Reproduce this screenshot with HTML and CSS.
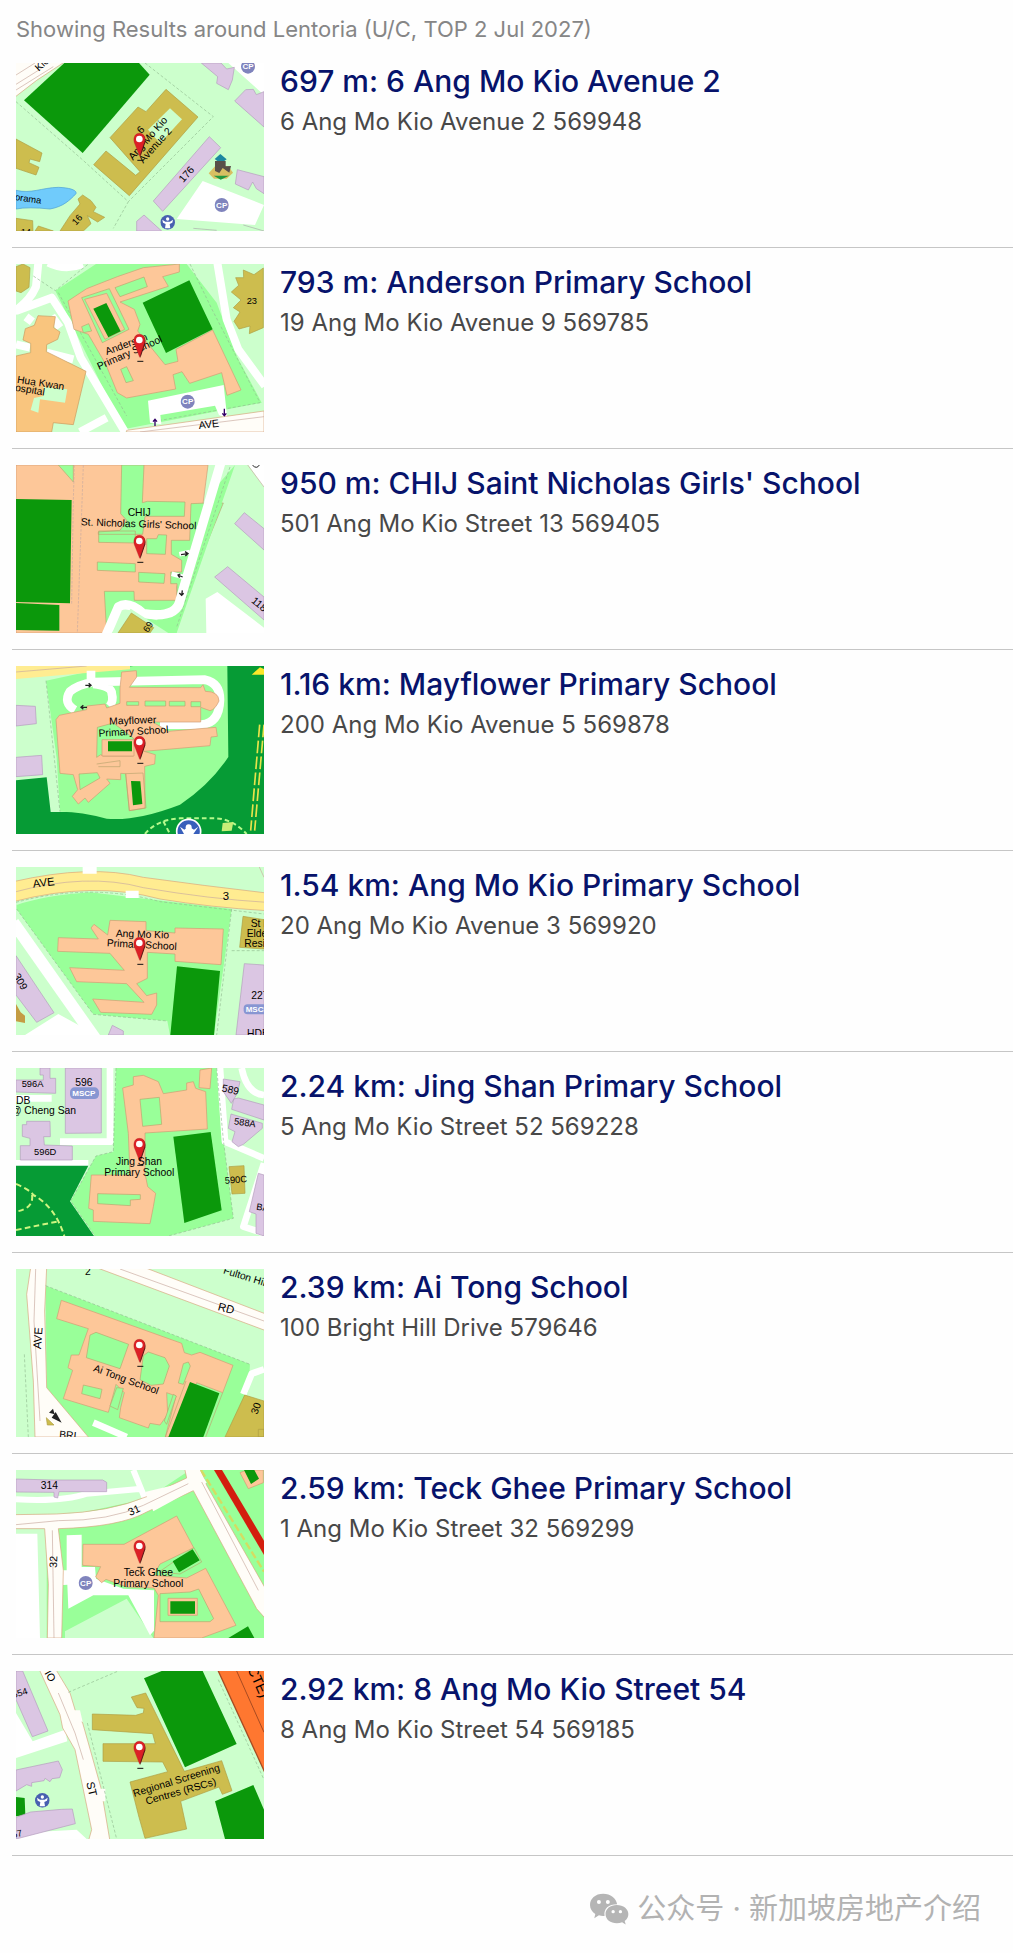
FILE: index.html
```html
<!DOCTYPE html>
<html lang="en">
<head>
<meta charset="utf-8">
<meta name="viewport" content="width=device-width, initial-scale=1">
<title>Schools around Lentoria</title>
<link rel="stylesheet" href="styles.css">
</head>
<body>
<svg class="defs" aria-hidden="true">
  <defs>
    <symbol id="pin" viewBox="0 0 50 90" overflow="visible">
      <path d="M27 74 L42 30 Q44 14 34 7 L24 40 Z" fill="#411"/>
      <path d="M25 72 L11 36 C4 22 8 3 24 3 C41 3 45 20 37 36 Z" fill="#dc2026" stroke="#a22" stroke-width="1"/>
      <circle cx="24" cy="20" r="10" fill="#fff"/>
      <path d="M18 84H36" stroke="#111" stroke-width="3"/>
    </symbol>
    <symbol id="cp" viewBox="0 0 44 44">
      <circle cx="22" cy="22" r="21" fill="#8084bd"/>
      <text x="22" y="30" text-anchor="middle" font-size="24" font-weight="700" fill="#fff">CP</text>
    </symbol>
    <symbol id="club" viewBox="0 0 44 44">
      <circle cx="22" cy="22" r="22" fill="#4860b0"/>
      <circle cx="22" cy="12" r="5" fill="#fff"/>
      <path d="M6 14 L15 20 H29 L38 14 L36 23 L28 27 L30 40 H14 L16 27 L8 23Z" fill="#fff"/>
    </symbol>
  </defs>
</svg>

<main class="results">
  <p class="summary">Showing Results around Lentoria (U/C, TOP 2 Jul 2027)</p>
  <ul class="list">
    <li class="item">
      <svg class="map" viewBox="18 24 744 504" role="img" aria-label="Map of 6 Ang Mo Kio Avenue 2">
        <path class="lawn" d="M18 24H762V528H18Z"/>
        <path class="road edge" d="M10 20H165L80 76L10 130Z"/>
        <path class="line" d="M18 60L75 24M18 105L130 35M18 88L95 40"/>
        <path class="hedge" d="M18 140L215 312L355 440L310 520M405 24L610 185L355 440"/>
        <path class="white" d="M655 24L762 120V24ZM578 378L762 450L735 510L500 492Z"/>
        <path class="field" d="M163 24H387L419 59L218 294L42 136Z"/>
        <path class="tan" d="M468 103L564 186L358 422L251 329L288 288L377 361L390 350L300 248L384 156L408 170Z"/>
        <path class="lawn" d="M480 160L516 193L450 265L414 224Z"/>
        <path class="purple" d="M598 245L632 278L458 469L430 438ZM574 24H633L650 42L673 37L667 75L655 104L620 85L623 65ZM707 104L730 103L739 119L762 110V216L674 138ZM682 344L762 365V416L739 401L728 381L715 405L676 387ZM402 480L455 528H380V499Z"/>
        <path class="tan" d="M18 252L96 294L89 320L60 312L57 323L87 337L78 360L18 340ZM204 432L218 420L243 437L258 457L250 470L284 487L263 501L232 482L243 506L220 528H150L180 482L210 447ZM18 490L68 497L69 528H18ZM85 513L130 528H75Z"/>
        <path class="water" d="M18 406C65 417 95 398 145 397C180 398 202 406 198 416C180 435 160 455 120 462Q55 455 18 462Z"/>
        <path class="gray" d="M550 520L620 526M700 510L762 528"/>
        <text class="label" transform="translate(86 50) rotate(-42)">Kio</text>
        <text class="label" transform="translate(14 435) rotate(8)" font-size="28">orama</text>
        <text class="label" transform="translate(520 384) rotate(-48)">176</text>
        <text class="label" transform="translate(198 512) rotate(-48)" font-size="28">16</text>
        <text class="label" transform="translate(32 540)" font-size="28">14</text>
        <text class="label" transform="translate(394 238) rotate(-47)">6</text>
        <text class="label" transform="translate(369 317) rotate(-49)">Ang Mo Kio</text>
        <text class="label" transform="translate(400 326) rotate(-48)">Avenue 2</text>
        <use href="#pin" x="364" y="232" width="50" height="90"/>
        <use href="#cp" x="613" y="428" width="44" height="44"/>
        <use href="#cp" x="692" y="13" width="44" height="44"/>
        <use href="#club" x="451" y="480" width="44" height="44"/>
        <path d="M596 355L615 334L655 333L669 353L650 371H612Z" fill="#d8bf62"/>
        <path d="M614 312L631 297L650 313L640 320H625Z" fill="#1c87a0"/>
        <path d="M615 348V318H647V334L663 333L658 353L638 339L628 354Z" fill="#584f49"/>
        <path d="M611 362H657L632 374Z" fill="#229940"/>
      </svg>
      <div class="info">
        <h2 class="name"><a href="#ang-mo-kio-avenue-2">697 m: 6 Ang Mo Kio Avenue 2</a></h2>
        <p class="address">6 Ang Mo Kio Avenue 2 569948</p>
      </div>
    </li>
    <li class="item">
      <svg class="map" viewBox="18 24 744 504" role="img" aria-label="Map of Anderson Primary School">
        <path class="lawn" d="M18 24H762V528H18Z"/>
        <path class="school" d="M136 104L258 24H530L620 140L680 300L755 440L340 520Z"/>
        <path class="way" stroke-width="24" d="M85 20L78 92Q60 135 10 168M18 165L125 125L174 200L212 305L345 528M622 20L650 190L685 280L765 390M115 20Q165 45 218 24M210 528L290 485M18 265L60 275M110 290L190 310M65 180L50 200M125 180L150 215"/>
        <path class="hedge" d="M70 60L136 104L235 24M145 110L350 480M540 24L606 160L750 440L440 495"/>
        <path class="building" d="M174 135L230 98L322 62L400 35L508 24V48L458 62L475 91L330 138L373 160L390 205L383 225L465 326L504 316L498 280L608 222L693 402L651 418L635 350L539 382L516 347L489 356L497 399L350 426L322 410L288 326L235 235L192 220Z"/>
        <path class="school thin" d="M315 95L402 63L412 92L330 122ZM215 125L298 98L357 220L277 260Z"/>
        <path class="building" d="M224 130L290 112L344 220L285 250Z"/>
        <path class="school thin" d="M215 212L236 203L245 225L220 230ZM332 340L350 332L370 374L348 380Z"/>
        <path class="field" d="M398 140L538 73L608 220L468 291ZM250 158L289 141L332 226L295 244Z"/>
        <path class="hospital" d="M84 179L136 182L131 215L150 228L143 250L110 266L109 287L228 346L190 506L130 500L125 528H18V300L62 290V262L39 252L46 218L73 208Z"/>
        <path class="lawn" d="M100 393L172 400L165 440L90 430L85 470L62 462L72 426L100 420Z"/>
        <path class="tan" d="M18 32L39 24L60 35L57 94L33 110L18 105ZM677 65H701L700 42L732 56L760 36V215L718 233L720 210L687 219L672 196L690 168L670 155L693 132L664 108L686 88Z"/>
        <path class="white" d="M414 434L641 387L652 489L627 477L615 449L451 477L454 505L420 500Z"/>
        <path class="road edge" d="M350 523L762 465V528H350Z"/>
        <path class="line" d="M390 528L762 482"/>
        <use href="#cp" x="511" y="415" width="44" height="44"/>
        <path d="M435 510V492M429 497L435 490L441 497M643 458V478M637 472L643 479L649 472" fill="none" stroke="#306" stroke-width="4"/>
        <text class="label" transform="translate(290 297) rotate(-20)">Anderson</text>
        <text class="label" transform="translate(267 342) rotate(-24)">Primary School</text>
        <text class="label" transform="translate(20 380) rotate(9)">Hua Kwan</text>
        <text class="label" transform="translate(-8 401) rotate(9)">Hospital</text>
        <text class="label" x="710" y="143" font-size="28">23</text>
        <text class="label" transform="translate(567 519) rotate(-6)" font-size="32">AVE</text>
        <use href="#pin" x="364" y="232" width="50" height="90"/>
      </svg>
      <div class="info">
        <h2 class="name"><a href="#anderson">793 m: Anderson Primary School</a></h2>
        <p class="address">19 Ang Mo Kio Avenue 9 569785</p>
      </div>
    </li>
    <li class="item">
      <svg class="map" viewBox="18 24 744 504" role="img" aria-label="Map of CHIJ Saint Nicholas Girls' School">
        <path class="lawn" d="M18 24H762V528H18Z"/>
        <path class="building" d="M18 24H594L570 210L500 390L500 436L370 430L350 437L285 528H18Z"/>
        <path class="school thin" d="M335 24H402L397 137L412 133L525 135L523 178L405 178L398 232H265V225L330 220L350 190L332 170ZM590 138H640L500 480L392 460L340 440L290 528L283 403L372 403L373 430H501V380H482V345H515V310L484 292V250H539L543 140ZM410 245H440L445 233L470 234L466 292L410 290ZM262 315L376 320V345L262 340ZM386 346L465 350L462 379L386 375ZM266 222H376V258L266 256ZM145 24H190V75Z"/>
        <path class="school" d="M610 100L675 24L500 528H320L360 470L440 490L510 430Z"/>
        <path class="line" d="M220 24L202 528M193 24L190 130L185 440" stroke-dasharray="8 4"/>
        <path class="hedge" d="M660 30L500 510"/>
        <path class="way" stroke-width="28" d="M634 12L510 430Q500 485 400 470Q355 430 325 450L286 540"/>
        <path class="way" stroke-width="14" d="M540 285L508 292M520 360L485 350"/>
        <path class="field" d="M18 126L185 129L180 439L18 435ZM18 438L148 444V521L18 519Z"/>
        <path class="lawn" d="M362 455L475 528H305Z"/>
        <path class="tan" d="M364 468L431 512L420 528H324Z"/>
        <path class="white" d="M622 405L762 512V528H589L587 425ZM715 24H762V90Z"/>
        <path class="line" d="M713 24L762 90"/>
        <path class="purple" d="M703 167L762 215V279L674 200ZM653 329L762 420V489L614 360Z"/>
        <path d="M513 293L533 290M525 284L534 290L526 297M503 354L518 360M511 351L504 354L509 362M517 400L515 416M508 408L515 415L521 409" fill="none" stroke="#222" stroke-width="4"/>
        <text class="label" x="353" y="178">CHIJ</text>
        <text class="label" transform="translate(212 205) rotate(2)">St. Nicholas Girls' School</text>
        <text class="label" transform="translate(722 434) rotate(40)">118</text>
        <text class="label" transform="translate(414 528) rotate(-58)" font-size="28">69</text>
        <path d="M727 24Q740 38 748 24" fill="none" stroke="#222" stroke-width="3"/>
        <use href="#pin" x="364" y="232" width="50" height="90"/>
      </svg>
      <div class="info">
        <h2 class="name"><a href="#chij">950 m: CHIJ Saint Nicholas Girls' School</a></h2>
        <p class="address">501 Ang Mo Kio Street 13 569405</p>
      </div>
    </li>
    <li class="item">
      <svg class="map" viewBox="18 24 744 504" role="img" aria-label="Map of Mayflower Primary School">
        <path class="park" d="M18 24H762V528H18Z"/>
        <path class="lawn" d="M18 24H240V462H122L110 358L18 367Z"/>
        <path class="school" d="M108 68L240 40L370 24H652L655 297Q600 380 510 440Q380 490 290 482Q210 460 150 461L140 300Z"/>
        <path class="highway" d="M18 24H360V34L18 63Z"/>
        <path class="line" d="M18 42L230 24"/>
        <path class="hedge" d="M108 68L150 461"/>
        <path class="way" stroke-width="26" d="M243 38V75M195 156Q158 135 180 100Q205 80 250 72L585 65Q630 75 630 125Q628 195 575 200H450M250 78Q305 85 305 105Q312 130 298 145"/>
        <path class="purple" d="M18 142L76 145L79 197L18 204ZM18 298L95 292L98 350L18 356Z"/>
        <path class="building" d="M335 42L379 38L380 57L358 88L572 89L579 80L586 100Q626 100 627 129Q615 155 600 158L572 148V192H428L475 220L618 208L622 235L603 237L600 263L402 280L436 290L434 318L404 325L405 450L358 458L347 347L332 346V365L290 363L300 376L235 433L225 420L205 438L187 415L203 395L190 350L150 346L138 185L148 172L230 155L231 144L285 138L290 150L330 136V90Z"/>
        <path class="school thin" d="M262 208L310 195L370 240V294H280L272 290L260 298ZM350 131H386V142H350ZM405 129H467V144H405ZM478 130H525V144H478ZM543 131H572V146H543ZM207 348L262 344L270 360L210 395Z"/>
        <path class="building" d="M276 245H372V294H276Z"/>
        <path class="field" d="M294 250H366V280H294ZM363 369L391 370L397 438L369 442Z"/>
        <path class="thin" fill="none" d="M260 318L330 308V326H265M347 347L399 345L408 450L358 458Z"/>
        <path d="M405 528Q440 485 510 481H620Q670 485 710 528M460 490L480 528" fill="none" stroke="#b4f98b" stroke-width="6" stroke-dasharray="14 9"/>
        <path d="M762 200L734 518M749 200L722 518" fill="none" stroke="#e8e34b" stroke-width="5" stroke-dasharray="38 10"/>
        <path d="M725 50L750 28L762 33V50Z" fill="#fbe72a"/>
        <path d="M638 495L670 492L665 518L635 520Z" fill="#c7ed77"/>
        <circle cx="536" cy="520" r="36" fill="#385fbb" stroke="#fff" stroke-width="5"/>
        <path d="M510 506L523 515L535 505L552 515L565 506L550 528H522Z" fill="#fff"/>
        <circle cx="536" cy="508" r="9" fill="#fff"/>
        <path d="M226 82H242M236 76L243 82L236 88M231 148H213M220 142L213 148L220 154" fill="none" stroke="#222" stroke-width="4"/>
        <text class="label" transform="translate(298 200) rotate(-2)">Mayflower</text>
        <text class="label" transform="translate(266 236) rotate(-3)">Primary School</text>
        <use href="#pin" x="364" y="232" width="50" height="90"/>
      </svg>
      <div class="info">
        <h2 class="name"><a href="#mayflower">1.16 km: Mayflower Primary School</a></h2>
        <p class="address">200 Ang Mo Kio Avenue 5 569878</p>
      </div>
    </li>
    <li class="item">
      <svg class="map" viewBox="18 24 744 504" role="img" aria-label="Map of Ang Mo Kio Primary School">
        <path class="lawn" d="M18 24H762V528H18Z"/>
        <path class="school" d="M20 138Q100 110 240 100L665 150L612 528H480L472 486L250 466L20 150Z"/>
        <path class="highway edge" d="M10 68Q240 15 400 55Q580 80 770 102V155Q600 145 450 120Q250 65 10 128Z"/>
        <path class="line" d="M10 100Q230 40 400 86Q600 120 770 130"/>
        <path class="hedge" d="M18 130Q240 70 450 128L762 165M665 150L620 528M665 275H762M20 150L250 466L472 486"/>
        <path class="way" stroke-width="36" d="M10 190L260 545"/>
        <path class="white" d="M218 20H260V44H218ZM347 95H386V117H347ZM45 528L145 465L260 528Z"/>
        <path class="building" d="M300 184L408 188V215L495 222V207L640 210L633 317L495 307V285L412 280V358L380 374L410 410L440 402V438L425 466L272 460L248 420L402 430L350 374L200 368L179 326L343 334L300 283L143 277L145 236L265 240L243 207L252 196L293 228Z"/>
        <path class="field" d="M501 322L630 336L612 528H481Z"/>
        <path class="tan" d="M699 172L762 182V270L689 265Z"/>
        <path class="purple" d="M703 314L762 318V528H678ZM18 290L132 461L80 490L18 408ZM307 499L340 516V528H295Z"/>
        <path d="M18 435L32 460L45 470V492L18 487Z" fill="#c49c43"/>
        <path class="line" d="M748 24L762 55"/>
        <rect x="701" y="436" width="85" height="30" rx="12" fill="#8896d2"/>
        <text class="label" x="707" y="460" font-size="24" font-weight="700" fill="#fff">MSCP</text>
        <text class="label" transform="translate(70 86) rotate(-7)" font-size="34">AVE</text>
        <text class="label" x="638" y="122" font-size="34">3</text>
        <text class="label" transform="translate(317 233) rotate(2)">Ang Mo Kio</text>
        <text class="label" transform="translate(290 262) rotate(3)">Primary School</text>
        <text class="label" x="722" y="203">St H</text><text class="label" x="710" y="233">Elder</text><text class="label" x="703" y="264">Resid</text>
        <text class="label" x="724" y="420">227</text><text class="label" x="711" y="533">HDB</text>
        <text class="label" transform="translate(10 350) rotate(61)">309</text>
        <use href="#pin" x="364" y="232" width="50" height="90"/>
      </svg>
      <div class="info">
        <h2 class="name"><a href="#ang-mo-kio">1.54 km: Ang Mo Kio Primary School</a></h2>
        <p class="address">20 Ang Mo Kio Avenue 3 569920</p>
      </div>
    </li>
    <li class="item">
      <svg class="map" viewBox="18 24 744 504" role="img" aria-label="Map of Jing Shan Primary School">
        <path class="lawn" d="M18 24H762V528H18Z"/>
        <path class="school" d="M318 24H620L640 240L670 475L475 528H255L182 423L258 288L310 275Z"/>
        <path class="way" stroke-width="20" d="M300 24V245H150M630 24L645 245L762 295M18 115H125M695 24Q710 100 762 105M762 310L700 500L762 520M18 310H235"/>
        <path class="park" d="M18 317H235L180 424L252 528H18Z"/>
        <path class="hedge" d="M318 24L310 275L258 288L182 423L255 528M620 24L640 240L670 475L475 528"/>
        <path class="building" d="M370 50L400 46L445 65L460 101L530 90V69L550 65L557 85L587 95L592 207L405 219L405 340L413 380L437 400L430 440L420 491L250 484V450L236 445L244 345H360L355 220L338 84L370 75ZM570 30L605 24L600 86L567 83Z"/>
        <path class="school thin" d="M390 118L448 112L455 193L398 199ZM263 401L391 404V418L361 420V437L263 431Z"/>
        <path class="field" d="M490 230L602 216L635 451L523 489Z"/>
        <path class="purple" d="M90 24H120V55H137V100L18 96V60H100V45H90ZM166 24H274V219L166 220ZM50 184H120L121 230H101L103 255L187 258V300H31V257H60V235L37 229V194H50ZM640 57L690 65L682 100L664 130L640 95ZM671 117L685 114L762 135V180L665 148ZM663 162L757 190V205L700 253L685 260L666 245L675 215L655 205ZM745 340L762 345V528L738 520V462L718 455Z"/>
        <path class="tan" d="M657 320L702 317L705 400L666 402Z"/>
        <path d="M18 372Q60 390 70 405Q135 440 163 528M66 405Q72 445 18 455M18 510L140 485" stroke="#cef580" stroke-width="6" stroke-dasharray="17 10" fill="none"/>
        <rect x="180" y="82" width="87" height="35" rx="14" fill="#8896d2"/>
        <text class="label" x="187" y="108" font-size="24" font-weight="700" fill="#fff">MSCP</text>
        <text class="label" x="35" y="80" font-size="28">596A</text><text class="label" x="196" y="77">596</text>
        <text class="label" x="18" y="132">DB</text><text class="label" x="3" y="163">@ Cheng San</text><text class="label" x="72" y="286" font-size="28">596D</text>
        <text class="label" transform="translate(634 94) rotate(12)">589</text><text class="label" transform="translate(671 193) rotate(8)" font-size="28">588A</text>
        <text class="label" transform="translate(645 371) rotate(-4)" font-size="28">590C</text><text class="label" transform="translate(738 449) rotate(8)" font-size="28">BA</text>
        <use href="#pin" x="364" y="232" width="50" height="90"/>
        <text class="label" x="318" y="315">Jing Shan</text><text class="label" x="283" y="347">Primary School</text>
      </svg>
      <div class="info">
        <h2 class="name"><a href="#jing-shan">2.24 km: Jing Shan Primary School</a></h2>
        <p class="address">5 Ang Mo Kio Street 52 569228</p>
      </div>
    </li>
    <li class="item">
      <svg class="map" viewBox="18 24 744 504" role="img" aria-label="Map of Ai Tong School">
        <path class="lawn" d="M18 24H762V528H18Z"/>
        <path class="school" d="M107 74L720 310L715 390L645 528H235L110 380Z"/>
        <path class="road edge" d="M62 20H110L104 150L110 380L235 528H75L70 360L50 100ZM260 20L770 210V160L405 20Z"/>
        <path class="line" d="M77 24L72 180L90 480M330 24L762 180"/>
        <path class="hedge" d="M107 74L720 310M43 280L55 528"/>
        <path class="way" stroke-width="20" d="M250 485L350 528M762 325L725 338L700 400"/>
        <path class="building" d="M154 118L515 247L523 275L545 282L570 274L669 313L638 395L560 365L545 400L480 528H466L498 405L470 395L473 460L450 492L420 487L415 501L328 470L332 440L343 395L318 370L295 454L160 413L188 328L174 320L184 282H207L235 203L140 173Z"/>
        <path class="school thin" d="M240 222L258 214L356 250L330 323L229 290ZM400 284L415 273L465 290L478 315L460 369L423 373L390 356ZM520 308L535 303L541 315L520 370L505 366ZM220 372L276 385L270 413L215 398ZM320 380L340 382L323 446L300 435ZM490 400L499 405L470 490L463 480Z"/>
        <path class="field" d="M540 363L628 397L580 528H475Z"/>
        <path class="thin" fill="none" d="M638 395L587 528M528 360L466 528"/>
        <path class="tan" d="M704 402L762 420V528H645ZM745 505H762V528H745Z"/>
        <path d="M117 455L129 443L134 460ZM125 470L137 453L155 485Z" fill="#222"/>
        <path class="tan" d="M109 470L132 492H112Z"/>
        <text class="label" x="225" y="43">2</text>
        <text class="label" transform="translate(638 37) rotate(17)">Fulton Hill</text>
        <text class="label" transform="translate(622 147) rotate(15)" font-size="34">RD</text>
        <text class="label" transform="translate(93 265) rotate(-86)" font-size="34">AVE</text>
        <text class="label" transform="translate(248 330) rotate(20)">Ai Tong School</text>
        <text class="label" transform="translate(742 462) rotate(-70)">30</text>
        <text class="label" transform="translate(147 530) rotate(5)">BRI</text>
        <use href="#pin" x="364" y="232" width="50" height="90"/>
      </svg>
      <div class="info">
        <h2 class="name"><a href="#ai-tong">2.39 km: Ai Tong School</a></h2>
        <p class="address">100 Bright Hill Drive 579646</p>
      </div>
    </li>
    <li class="item">
      <svg class="map" viewBox="18 24 744 504" role="img" aria-label="Map of Teck Ghee Primary School">
        <path class="school" d="M18 24H762V528H18Z"/>
        <path class="lawn" d="M18 24H540L410 110L200 155L18 160ZM165 508L350 410L430 528H165ZM18 200H110V528H18Z"/>
        <path class="white" d="M18 215H82L90 528H18ZM170 220L215 218V315H255L258 350L340 380L432 385V506L420 520L355 400L250 400L175 440L172 368L150 370V325H170Z"/>
        <path class="way" stroke-width="18" d="M18 112Q160 120 230 95L395 80M370 24L405 110M18 372H82"/>
        <path class="road edge" d="M10 158L140 156Q300 150 410 104L530 48L524 20H570L590 70L775 395V480L740 440L550 86L410 150Q330 195 145 200L160 325L155 528H112L115 365L104 200L10 200Z"/>
        <path d="M405 90L430 148L540 88L590 62L565 20H535L530 60Z" fill="#fffdf8"/>
        <path class="line" d="M18 188L145 176Q300 177 400 130L535 65M575 60L745 385M127 205L132 528"/>
        <path d="M612 24H636L762 236V279Z" fill="#d31e0e"/>
        <path d="M573 24L762 329" fill="none" stroke="#d4dc62" stroke-width="7" stroke-dasharray="23 9"/>
        <path class="building" d="M219 247H342L500 162L551 257L450 306L430 340L530 348L587 319L678 490L575 528H432L445 400L432 378L350 375L288 352L275 362L257 345L272 314L218 310ZM690 32L710 24H760V62L715 80Z"/>
        <path class="school thin" d="M447 330L552 257L575 300L510 336ZM450 395L540 390L566 381L611 470L600 479H450Z"/>
        <path class="building" d="M474 409H562V460H474Z"/>
        <path class="field" d="M488 298L548 262L569 295L507 331ZM481 418H555V455H481ZM655 528L714 493L733 528ZM702 24H733L747 50L723 66Z"/>
        <path class="purple" d="M18 51L130 54H278L290 61V89H147L143 108L132 105V91L18 90Z"/>
        <text class="label" x="92" y="82">314</text>
        <text class="label" transform="translate(360 162) rotate(-24)" font-size="32">31</text>
        <text class="label" transform="translate(140 318) rotate(-87)" font-size="32">32</text>
        <text class="label" x="341" y="342">Teck Ghee</text><text class="label" x="310" y="374">Primary School</text>
        <use href="#cp" x="205" y="341" width="44" height="44"/>
        <use href="#pin" x="364" y="232" width="50" height="90"/>
      </svg>
      <div class="info">
        <h2 class="name"><a href="#teck-ghee">2.59 km: Teck Ghee Primary School</a></h2>
        <p class="address">1 Ang Mo Kio Street 32 569299</p>
      </div>
    </li>
    <li class="item">
      <svg class="map" viewBox="18 24 744 504" role="img" aria-label="Map of 8 Ang Mo Kio Street 54">
        <path class="lawn" d="M18 24H762V528H18Z"/>
        <path class="white" d="M18 150L68 235L165 200L172 235L18 285ZM18 510L200 500L230 528H18Z"/>
        <path class="road edge" d="M88 20H138L180 90L198 150L218 180L235 240L273 375L300 535H235L245 500L195 260L158 195L150 155Z"/>
        <path d="M180 142H210L218 176H185ZM252 377H286V415H258Z" fill="#fffdf8"/>
        <path class="line" d="M145 90L195 210L220 290"/>
        <path class="hedge" d="M175 88L325 24M232 180L320 528M625 50L762 350"/>
        <path class="field" d="M402 46L455 24H578L680 243L525 313ZM615 415L730 366L762 440V528H645ZM18 402L44 405L46 456L18 460Z"/>
        <path class="tan" d="M364 102L407 90L523 325L635 293L666 383L637 394L627 372L512 415L530 498L405 526L387 463L360 357L473 326L458 297L279 295V242H436L428 212L247 200V153L377 157L400 150L402 136L381 134Z"/>
        <path d="M623 20H770V340Z" fill="#ff7730" stroke="#a84b21" stroke-width="4"/>
        <path d="M680 24L762 208" fill="none" stroke="#a84b21" stroke-width="3"/>
        <path class="purple" d="M18 24H38L114 204L67 221L18 110ZM18 321L145 294L157 320L149 344L126 347L120 356L105 346L102 353L65 359V370L50 365L18 384ZM18 463L62 447L155 439L187 438L196 482L18 528Z"/>
        <text class="label" transform="translate(10 106) rotate(-17)" font-size="28">554</text>
        <text class="label" transform="translate(103 30) rotate(60)" font-size="32">IO</text>
        <text class="label" transform="translate(229 359) rotate(77)" font-size="34">ST</text>
        <text class="label" transform="translate(8 526) rotate(-14)" font-size="28">57</text>
        <text class="label" transform="translate(373 402) rotate(-17)">Regional Screening</text>
        <text class="label" transform="translate(410 425) rotate(-16)">Centres (RSCs)</text>
        <text class="label" transform="translate(712 18) rotate(66)" font-size="42">CTE)</text>
        <use href="#club" x="75" y="390" width="44" height="44"/>
        <use href="#pin" x="364" y="232" width="50" height="90"/>
      </svg>
      <div class="info">
        <h2 class="name"><a href="#ang-mo-kio-street-54">2.92 km: 8 Ang Mo Kio Street 54</a></h2>
        <p class="address">8 Ang Mo Kio Street 54 569185</p>
      </div>
    </li>
  </ul>
</main>
<footer class="account">
  <svg class="account-icon" viewBox="44 154 118 96" aria-hidden="true">
    <path d="M84 156C60 156 44 171 44 190C44 201 50 211 60 217L57 230L71 221Q79 224 88 223C85 201 100 188 126 188C123 169 106 156 84 156Z"/>
    <path d="M125 190C105 190 91 202 91 217C91 234 106 245 125 245Q134 245 141 242L152 249L149 238C157 233 160 225 160 217C160 202 145 190 125 190Z"/>
    <g class="eyes"><circle cx="71" cy="181" r="6"/><circle cx="98" cy="181" r="6"/><circle cx="114" cy="210" r="5"/><circle cx="136" cy="210" r="5"/></g>
  </svg>
  <span lang="zh-CN">公众号 · 新加坡房地产介绍</span>
</footer>
</body>
</html>
```
FILE: styles.css
```css
* { box-sizing: border-box; }

body {
  margin: 0;
  background: #fefefe;
  color: #484848;
  font-family: Inter, "Liberation Sans", sans-serif;
}

.defs { position: absolute; width: 0; height: 0; }

.results { padding: 12px 0 0 12px; }

.summary {
  margin: 0;
  padding-left: 4px;
  color: #868686;
  font-size: 22px;
  line-height: 35px;
}

.list { margin: 0; padding: 0; list-style: none; }

.item {
  display: flex;
  gap: 16px;
  padding: 16px 4px;
  border-bottom: 1px solid #c6c6c6;
}

.map {
  flex: none;
  width: 248px;
  height: 168px;
  overflow: hidden;
  font-family: "Liberation Sans", Arial, sans-serif;
  font-size: 31px;
}

.info { min-width: 0; }

.name {
  margin: 0;
  font-size: 30px;
  font-weight: 550;
  line-height: 36px;
}

.name a { color: #07136b; text-decoration: none; }

.address {
  margin: 0;
  font-size: 24px;
  line-height: 46px;
}

/* Map layers */
.lawn { fill: #ccffcc; }
.school { fill: #99ff99; }
.park { fill: #069b35; }
.field { fill: #0b980b; }
.building { fill: #fdc799; stroke: #d09b72; stroke-width: 2; }
.hospital { fill: #f9c57e; stroke: #c99a5e; stroke-width: 2; }
.tan { fill: #cdbd4e; stroke: #ae9d43; stroke-width: 2; }
.purple { fill: #dbc6e3; stroke: #b39bbd; stroke-width: 2; }
.water { fill: #70cbfb; stroke: #4b9ed2; stroke-width: 2; }
.white { fill: #fff; }
.road { fill: #fffdf8; }
.highway { fill: #ffec91; }
.edge { stroke: #d8a47c; stroke-width: 2; }
.thin { stroke: #bba56e; stroke-width: 2; }
.line { fill: none; stroke: #c9aaa0; stroke-width: 2; }
.gray { fill: none; stroke: #aaa; stroke-width: 2; }
.hedge { fill: none; stroke: #93bd91; stroke-width: 2; stroke-dasharray: 9 6; }
.way { fill: none; stroke: #fff; stroke-linejoin: round; }
.label { stroke: none; }

.account {
  display: flex;
  align-items: center;
  justify-content: flex-end;
  gap: 8px;
  padding: 33px 32px 23px 12px;
  color: #b2b2b2;
  font-family: Inter, "Noto Sans CJK SC", sans-serif;
  font-size: 29px;
  font-weight: 400;
  line-height: 40px;
}

.account-icon { width: 39px; height: 32px; fill: #b5b5b5; }
.eyes { fill: #fff; }
```
